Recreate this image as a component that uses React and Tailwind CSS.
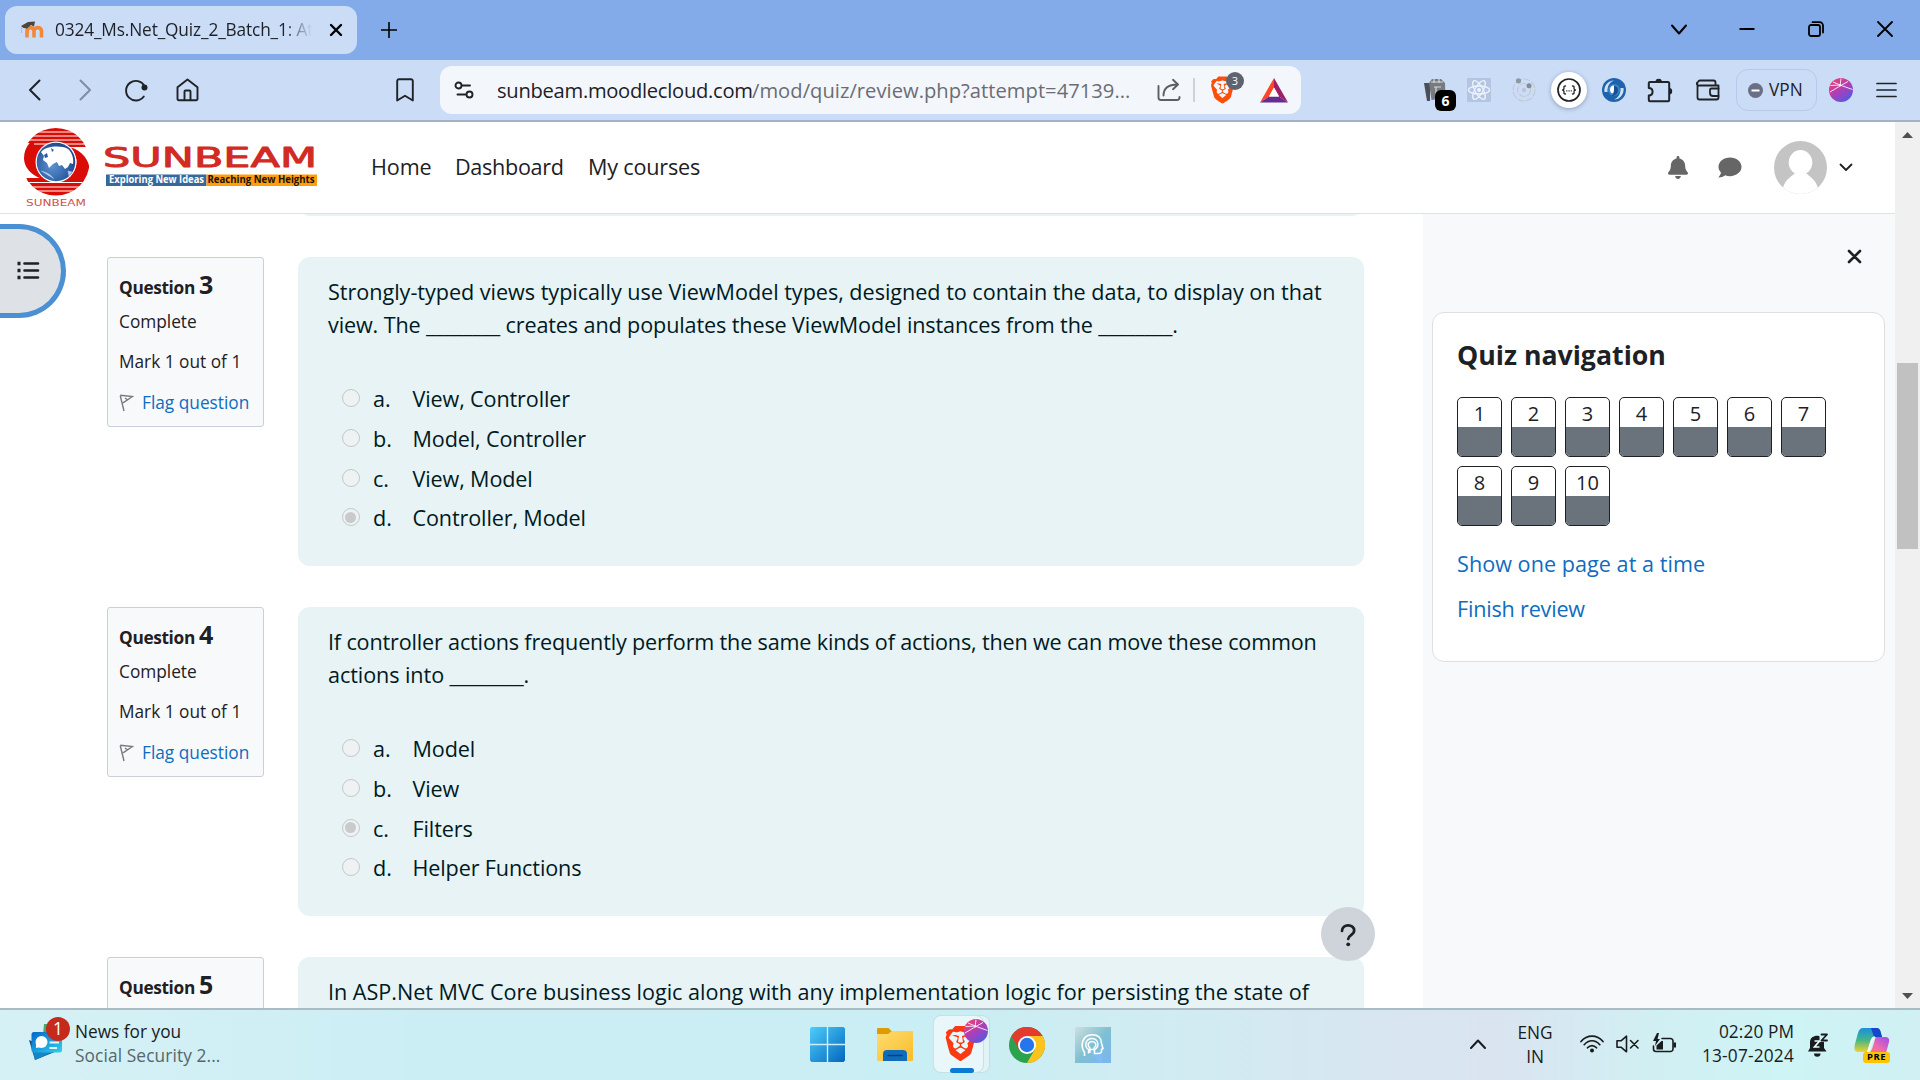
import { SiBrave } from 'react-icons/si';
import { FaBell, FaComment } from 'react-icons/fa';

const stroke = { fill: 'none', stroke: 'currentColor', strokeLinecap: 'round', strokeLinejoin: 'round' };

function MoodleIcon() {
  return (
    <svg className="h-[18px] w-[24px] shrink-0" viewBox="0 0 24 18">
      <path d="M7 16.500V10C7 5.500 14 5.500 14 10V16.500M14 10C14 5.500 21.500 5.500 21.500 10V16.500" fill="none" stroke="#f08a3a" strokeWidth="3.600" />
      <path d="M1 5 8 1l7-.5-1 5-3-1.500-4 3.500-3.500-.5Z" fill="#4a4542" />
      <path d="M1.500 6v6" stroke="#e9b08b" strokeWidth="1.200" />
    </svg>
  );
}

function TitleBar() {
  return (
    <div className="flex h-[60px] items-start bg-[#84abe9]">
      <div className="mt-1.5 ml-[5px] flex h-12 w-[352px] items-center rounded-xl bg-[#cbdcf6] pl-[15px]">
        <MoodleIcon />
        <div className="ml-[11px] w-[257px] overflow-hidden text-[17.28px] tracking-[-0.14px] whitespace-nowrap text-[#1d2127] [mask-image:linear-gradient(to_right,black_228px,transparent_257px)]">
          0324_Ms.Net_Quiz_2_Batch_1: Attempt
        </div>
        <svg className="ml-[17px] h-[14px] w-[14px]" viewBox="0 0 14 14"><path d="M2 2 12 12M12 2 2 12" {...stroke} strokeWidth="2.400" /></svg>
      </div>
      <svg className="mt-[22px] ml-6 h-4 w-4" viewBox="0 0 16 16"><path d="M8 .5v15M.5 8h15" {...stroke} strokeWidth="1.600" /></svg>
      <div className="mt-[21px] mr-[27px] ml-auto flex items-center text-black">
        <svg className="h-4 w-4" viewBox="0 0 16 16"><path d="M1 4.500 8 12.500 15 4.500" {...stroke} strokeWidth="2" /></svg>
        <svg className="ml-[52px] h-4 w-4" viewBox="0 0 16 16"><path d="M.5 8h15" stroke="currentColor" strokeWidth="2" /></svg>
        <svg className="ml-[53px] h-4 w-4" viewBox="0 0 16 16"><rect x="1" y="4" width="11" height="11" rx="2" {...stroke} strokeWidth="1.800" /><path d="M4.500 1.200H11.500A3.300 3.300 0 0 1 15 4.500V11.500" {...stroke} strokeWidth="1.800" /></svg>
        <svg className="ml-[53px] h-4 w-4" viewBox="0 0 16 16"><path d="M1 1 15 15M15 1 1 15" {...stroke} strokeWidth="1.800" /></svg>
      </div>
    </div>
  );
}

function AddressBar() {
  return (
    <div className="ml-[26px] flex h-12 w-[861px] items-center rounded-xl bg-[#f3f7fc]">
      <svg className="ml-[14px] h-5 w-5" viewBox="0 0 20 20"><g {...stroke} strokeWidth="1.900"><circle cx="4.500" cy="5.500" r="3" /><path d="M8.500 5.500H16M3.500 14.500h8" /><circle cx="15.500" cy="14.500" r="3" /></g></svg>
      <div className="ml-[23px] flex w-[636px] text-[20.16px] whitespace-nowrap">
        <span className="w-[255px] tracking-[-0.28px] text-[#1d2127]">sunbeam.moodlecloud.com</span>
        <span className="tracking-[0.03px] text-[#6a6d73]">/mod/quiz/review.php?attempt=47139...</span>
      </div>
      <svg className="ml-[24px] h-6 w-6 text-[#5b5f66]" viewBox="0 0 24 24"><g {...stroke} strokeWidth="1.900"><path d="M1.500 8V19.500a2.500 2.500 0 0 0 2.500 2.500H20a2.500 2.500 0 0 0 2.500-2.500V19" /><path d="M6.500 17.500C6.500 10 11 6.500 20.500 6.500M16 1.800l5 4.700-5 4.700" /></g></svg>
      <div className="ml-3 h-6 w-0.5 bg-[#ced3da]" />
      <div className="relative ml-[14px] h-[28px] w-[27px]">
        <SiBrave className="h-[28px] w-[27px] text-[#fb4e0a]" />
        <span className="absolute -top-[4px] left-[17px] flex h-[18px] w-[18px] items-center justify-center rounded-full bg-[#5f6370] text-[11px] text-white">3</span>
      </div>
      <svg className="ml-[24px] h-[25px] w-[28px]" viewBox="0 0 28 25">
        <path d="M14 0 0 24.500 9 18.500 14 9.500Z" fill="#ff4724" /><path d="M14 0 28 24.500 19 18.500 14 9.500Z" fill="#9e1f63" /><path d="M0 24.500H28L19 18.500H9Z" fill="#662d91" /><path d="M14 9.500 9 18.500h10Z" fill="#fff" />
      </svg>
    </div>
  );
}

function Orb({ className }) {
  return (
    <svg className={className} viewBox="0 0 24 24">
      <defs><linearGradient id="orb" x1="0.100" y1="0" x2="0.800" y2="1"><stop offset="0" stopColor="#f5416c" /><stop offset=".5" stopColor="#b23db5" /><stop offset="1" stopColor="#4b5be6" /></linearGradient></defs>
      <circle cx="12" cy="12" r="12" fill="url(#orb)" />
      <path d="M1 14Q9 9 19 3.500M4 4Q13 8 23.500 11.500M11 8.500 12 .5M1.500 7.500 12 7" stroke="#fff" strokeOpacity=".85" strokeWidth="1" fill="none" />
    </svg>
  );
}

function Toolbar() {
  return (
    <div className="flex h-[60px] items-center bg-[#cbdcf6] text-[#1f2227]">
      <svg className="ml-[28px] h-[22px] w-[13px]" viewBox="0 0 13 22"><path d="M11.500 1.500 2 11l9.500 9.500" {...stroke} strokeWidth="2" /></svg>
      <svg className="ml-[38px] h-[22px] w-[13px] text-[#7f8ca3]" viewBox="0 0 13 22"><path d="M1.500 1.500 11 11l-9.500 9.500" {...stroke} strokeWidth="2" /></svg>
      <svg className="ml-[32px] h-[24px] w-[25px]" viewBox="0 0 25 24"><path d="M19.800 18.500A9.800 9.800 0 1 1 20.500 8" {...stroke} strokeWidth="1.900" /><circle cx="20.500" cy="9.500" r="3" fill="currentColor" /></svg>
      <svg className="ml-[27px] h-[24px] w-[23px]" viewBox="0 0 23 24"><g {...stroke} strokeWidth="1.900"><path d="M1.500 9.200 11.500 1.500l10 7.700V21a1.200 1.200 0 0 1-1.200 1.200H2.700A1.200 1.200 0 0 1 1.500 21Z" /><path d="M8.500 22V13.500a1 1 0 0 1 1-1h4a1 1 0 0 1 1 1V22" /></g></svg>
      <svg className="ml-[197px] h-6 w-[18px]" viewBox="0 0 18 24"><path d="M1.200 3A1.800 1.800 0 0 1 3 1.200H15A1.800 1.800 0 0 1 16.800 3V22.500L9 17.800 1.200 22.500Z" {...stroke} strokeWidth="1.900" /></svg>
      <AddressBar />
      <div className="mr-[23px] ml-auto flex items-center">
        <div className="relative h-6 w-[22px]">
          <svg className="h-6 w-[22px]" viewBox="0 0 22 24"><path d="M0 5h6v18H3Z" fill="#4b4e52" /><path d="M5 5 8 1h9l4 4 .5 15-14 2Z" fill="#777b7f" /><path d="M7 4h12M10 1v4M15 1v4M10 9h7M12 9v7h4" stroke="#d5d9de" strokeWidth="1.200" fill="none" /></svg>
          <span className="absolute top-3 left-[11px] flex h-[21px] w-[21px] items-center justify-center rounded-md bg-black text-sm font-bold text-white">6</span>
        </div>
        <svg className="ml-[21px] h-6 w-6" viewBox="0 0 24 24"><rect width="24" height="24" rx="1" fill="#b3c5e3" /><g fill="none" stroke="#eef4fd" strokeWidth="1.300"><ellipse cx="12" cy="12" rx="10.500" ry="4" /><ellipse cx="12" cy="12" rx="10.500" ry="4" transform="rotate(60 12 12)" /><ellipse cx="12" cy="12" rx="10.500" ry="4" transform="rotate(120 12 12)" /></g><circle cx="12" cy="12" r="2" fill="#eef4fd" /></svg>
        <svg className="ml-[21px] h-6 w-6" viewBox="0 0 24 24"><g fill="none" stroke="#c2c9d5" strokeWidth="1.200" strokeDasharray="7 1.500"><circle cx="12" cy="12" r="11" /><circle cx="12" cy="12" r="6.500" /></g><circle cx="12" cy="12" r="2.200" fill="#bcc5d3" /><circle cx="6.500" cy="2.800" r="2.600" fill="#91969f" /><circle cx="17" cy="7.800" r="2.500" fill="#868b94" /></svg>
        <div className="ml-[15px] flex h-9 w-9 items-center justify-center rounded-full bg-white shadow-[0_1px_4px_rgba(60,80,110,0.45)]">
          <svg className="h-6 w-6" viewBox="0 0 24 24"><circle cx="12" cy="12" r="11" {...stroke} strokeWidth="1.700" /><path d="M8.500 8c-2 0-1.500 1-1.500 2.300S6.500 12 5.500 12c1 0 1.500.4 1.500 1.700S6.500 16 8.500 16M15.500 8c2 0 1.500 1 1.500 2.300s.5 1.700 1.500 1.700c-1 0-1.500.4-1.500 1.700s.5 2.300-1.500 2.300" {...stroke} strokeWidth="1.300" /><path d="M9.300 12.800h5.600" stroke="currentColor" strokeWidth="1.200" strokeDasharray="1.100 1.100" /></svg>
        </div>
        <svg className="ml-[15px] h-6 w-6" viewBox="0 0 24 24">
          <circle cx="12" cy="12" r="12" fill="#1f63ad" />
          <path d="M2.500 14A10 10 0 0 1 12 2.500C8 4 5 8 5.500 14Z" fill="#cfe2f4" />
          <path d="M21.500 10A10 10 0 0 1 12 21.500C16 20 19 16 18.500 10Z" fill="#cfe2f4" />
          <circle cx="12" cy="12" r="6" fill="#3b82c8" />
          <path d="M12 8a4 4 0 0 1 4 4c0 4-3 6-7 6 2-1 3-2.500 3-4.500Z" fill="#174f93" />
          <path d="M12 7.500a4 4 0 0 0-4 4.500c0 1.500 1 3 2.500 3.500Q12 14.500 12 12Z" fill="#fff" />
        </svg>
        <svg className="ml-[21px] h-[26px] w-[26px]" viewBox="0 0 26 26"><path d="M3 5H21A1.200 1.200 0 0 1 22.200 6V23a1.200 1.200 0 0 1-1.200 1.200H3A1.200 1.200 0 0 1 1.800 23V18.500c5 0 5-7.500 0-7.500V6A1.200 1.200 0 0 1 3 5Z" {...stroke} strokeWidth="2" /><path d="M8.500 5a3.200 3.200 0 0 1 6.400 0ZM22 11a3.200 3.200 0 0 1 0 6.400Z" fill="currentColor" /></svg>
        <svg className="ml-[23px] h-[22px] w-6" viewBox="0 0 24 22"><g {...stroke} strokeWidth="1.800"><path d="M1.500 5V18.500A2 2 0 0 0 3.500 20.500H20.500A2 2 0 0 0 22.500 18.500V6.500H3.500A1.700 1.700 0 0 1 2 3Q2.500 1.500 4 1.500H17.500A2 2 0 0 1 19.500 3.500V6.500" /><path d="M22.500 9.500H15.500a1.500 1.500 0 0 0-1.500 1.500v3a3 3 0 0 0 3 3h5.500" /></g></svg>
        <div className="ml-4 flex h-[42px] w-[81px] items-center rounded-xl border border-[#b7c9e8] pl-[11px]">
          <svg className="h-[15px] w-[15px]" viewBox="0 0 15 15"><circle cx="7.500" cy="7.500" r="7.500" fill="#6a6f87" /><path d="M3.500 7.500h8" stroke="#fff" strokeWidth="2" /></svg>
          <span className="ml-[6px] text-[17.28px]">VPN</span>
        </div>
        <Orb className="ml-[12px] h-6 w-6" />
        <svg className="ml-[23px] h-4 w-[21px]" viewBox="0 0 21 16"><path d="M1 1.500h19M1 8h19M1 14.500h19" {...stroke} strokeWidth="1.700" /></svg>
      </div>
    </div>
  );
}

function SunbeamLogo() {
  return (
    <svg className="ml-6 h-[82px] w-[296px]" viewBox="24 127 296 82">
      <defs>
        <clipPath id="disc"><circle cx="55.800" cy="161.800" r="33.800" /></clipPath>
        <radialGradient id="globe" cx=".4" cy=".6" r=".7"><stop offset="0" stopColor="#5a93cf" /><stop offset="1" stopColor="#173f8c" /></radialGradient>
      </defs>
      <g clipPath="url(#disc)" fill="#d90d06">
        <path d="M22 127H90V143H22Z" />
        <path d="M86 147H58C44 147 36 155 36 165 37 172 41 177 48 180 33 178 24 168 24 158 24 152 26 147 30 142.500H83Z" />
        <path d="M71 147.500C82 151 89.500 160 89.500 170 88 177 86 179 82 182H27L26 178H60C72 178 77 169 76.500 160 75.500 155 73.500 151 71 147.500Z" />
        <path d="M22 180H90V197H22Z" />
        <path d="M22 132H90M22 136H90M22 140H90M34 144H84M22 182.500H90M22 187H90M22 191H90" stroke="#fff" strokeWidth="1.200" />
      </g>
      <circle cx="56" cy="162" r="20.500" fill="#fff" />
      <circle cx="56" cy="162" r="19.300" fill="url(#globe)" />
      <path d="M41 152c5-6 20-7 27-3 4 3 6 10 5 15l-3-1-2 4-3 2-3-4-3 1-2-4-4 2-4 4-2-5-4-3 1-4Z" fill="#fff" />
      <path d="M44 155l3-2 1 4-3 1ZM51 148l3 2-2 2Z" fill="#2b5ba5" />
      <path d="M41 171q9 2 13 8M68 171l4 1-3 4Z" stroke="#a9c8ea" fill="#b9d2ee" strokeWidth=".6" />
      <text x="26" y="205.500" fill="#d4504a" fontFamily="DejaVu Sans" fontSize="8" textLength="60" lengthAdjust="spacingAndGlyphs">SUNBEAM</text>
      <text x="103" y="167" fill="#d22b24" stroke="#d22b24" strokeWidth=".9" strokeLinejoin="round" fontFamily="DejaVu Sans" fontSize="27" textLength="214" lengthAdjust="spacingAndGlyphs">SUNBEAM</text>
      <path d="M106 174.500H206.500V186H106Z" fill="#35699d" />
      <path d="M206.500 174.500H317V186H206.500Z" fill="#ff9d0a" />
      <text x="109" y="183.200" fill="#fff" fontFamily="Open Sans" fontWeight="700" fontSize="10" textLength="95" lengthAdjust="spacingAndGlyphs">Exploring New Ideas</text>
      <text x="207.500" y="183.200" fill="#1b1208" fontFamily="Open Sans" fontWeight="700" fontSize="10" textLength="107" lengthAdjust="spacingAndGlyphs">Reaching New Heights</text>
    </svg>
  );
}

function SiteHeader() {
  return (
    <header className="flex h-[92px] items-center border-b border-[#dee2e6] bg-white text-[21.6px] text-[#1d2125]">
      <SunbeamLogo />
      <nav className="ml-[51px] flex">
        <a className="w-[84px] tracking-[-0.1px]">Home</a>
        <a className="w-[133px] tracking-[-0.3px]">Dashboard</a>
        <a className="tracking-[-0.18px]">My courses</a>
      </nav>
      <div className="mr-[42px] ml-auto flex items-center text-[#666]">
        <FaBell className="h-[23px] w-5" />
        <FaComment className="ml-[30px] h-[23px] w-6" />
        <svg className="ml-[32px] h-[53px] w-[53px]" viewBox="0 0 53 53">
          <defs><clipPath id="avatar"><circle cx="26.500" cy="26.500" r="26.500" /></clipPath></defs>
          <g clipPath="url(#avatar)"><rect width="53" height="53" fill="#c4c4c4" /><ellipse cx="26.500" cy="21.500" rx="11.800" ry="12.500" fill="#fff" /><path d="M8 53C9 38 18 36 22 31h9c4 5 13 7 14 22Z" fill="#fff" /></g>
        </svg>
        <svg className="ml-[12px] h-[9px] w-[14px] text-[#1d2125]" viewBox="0 0 14 9"><path d="M1.500 1.500 7 7l5.500-5.500" {...stroke} strokeWidth="1.800" /></svg>
      </div>
    </header>
  );
}

function Blank() {
  return <span className="tracking-[-0.22px]">________</span>;
}

function Radio({ checked }) {
  return (
    <span className="flex h-[18px] w-[18px] items-center justify-center rounded-full border border-[#c4c8c9] bg-[#eff2f3]">
      {checked && <span className="h-[11px] w-[11px] rounded-full bg-[#c8cacb]" />}
    </span>
  );
}

function Question({ number, lines, options = [], answer }) {
  return (
    <section className="flex h-[350px] shrink-0 items-start">
      <div className="ml-[107px] h-[170px] w-[157px] rounded-[3px] border border-[#cad0d7] bg-[#f8f9fa] pl-[11px] text-[17.28px] text-[#1d2125]">
        <div className="mt-[8px] flex h-[37px] items-baseline font-bold">
          <span className="w-[80px] tracking-[-0.35px]">Question</span>
          <span className="text-[25px] leading-[36px]">{number}</span>
        </div>
        <div className="h-10 leading-[38px]">Complete</div>
        <div className="h-10 leading-[38px]">Mark 1 out of 1</div>
        <div className="flex h-10 items-center text-[#0f6cbf]">
          <svg className="h-[18px] w-[15px]" viewBox="0 0 15 18"><path d="M1.200 1.500 5 17M1.200 1.200 13.500 2.500 4 8.800M6 4l2 1.500" fill="none" stroke="#777b80" strokeWidth="1.400" /></svg>
          <span className="ml-[8px] leading-[36px] -mt-[1px]">Flag question</span>
        </div>
      </div>
      <div className="ml-[34px] h-[309px] w-[1066px] rounded-xl bg-[#e7f3f5] pt-[18px] pl-[30px] text-[21.6px] text-[#001a1e]">
        <div className="h-[104px] leading-[33px] whitespace-nowrap">
          {lines}
        </div>
        {options.map((text, i) => (
          <div key={text} className="flex h-[39.700px] items-center">
            <span className="-mt-[1px] ml-[13.500px]"><Radio checked={i === answer} /></span>
            <span className="ml-[13.500px] w-[39.500px] leading-[33px]">{'abcd'[i]}.</span>
            <span className="leading-[33px] tracking-[-0.13px]">{text}</span>
          </div>
        ))}
      </div>
    </section>
  );
}

function QuizNavigation() {
  return (
    <aside className="w-[472px] bg-[#f8f9fa] pl-[9px]">
      <svg className="mt-[35px] ml-[415px] h-[15px] w-[15px] text-[#1d2125]" viewBox="0 0 15 15"><path d="M2 2 13 13M13 2 2 13" {...stroke} strokeWidth="2.600" /></svg>
      <div className="mt-[48px] h-[350px] w-[453px] rounded-xl border border-[#dfdfdf] bg-white pl-6 text-[21.6px]">
        <h5 className="mt-[24px] h-[60px] text-[26.700px] leading-9 font-bold text-[#1d2125]">Quiz navigation</h5>
        <div className="grid grid-cols-[repeat(7,45px)] gap-[9px]">
          {[1, 2, 3, 4, 5, 6, 7, 8, 9, 10].map((n) => (
            <div key={n} className="flex h-[60px] flex-col overflow-hidden rounded-[5px] border border-[#1d2125] bg-white text-center text-[20px] text-[#1d2125]">
              <span className="h-[29px] leading-[32px]">{n}</span>
              <span className="flex-1 bg-[#6a737b]" />
            </div>
          ))}
        </div>
        <div className="mt-[21px] flex flex-col text-[#0f6cbf]">
          <a className="h-[45px] leading-[33px] tracking-[0.04px]">Show one page at a time</a>
          <a className="leading-[33px] tracking-[-0.2px]">Finish review</a>
        </div>
      </div>
    </aside>
  );
}

function Scrollbar() {
  return (
    <div className="flex w-[25px] flex-col items-center bg-[#f0f0f0]">
      <svg className="mt-[10px] h-[6px] w-[11px]" viewBox="0 0 11 6"><path d="M0 6 5.500 0 11 6Z" fill="#505050" /></svg>
      <div className="mt-[225px] h-[186px] w-[21px] bg-[#c1c1c1]" />
      <svg className="mt-auto mb-[9px] h-[6px] w-[11px]" viewBox="0 0 11 6"><path d="M0 0 5.500 6 11 0Z" fill="#505050" /></svg>
    </div>
  );
}

function Page() {
  return (
    <div className="flex h-[886px] bg-white">
      <div className="relative flex w-[1895px] flex-col">
        <SiteHeader />
        <div className="flex h-[794px] overflow-hidden">
          <main className="flex w-[1423px] flex-col overflow-hidden">
            <div className="mb-[41px] ml-[298px] flex h-[2px] w-[1066px] shrink-0 flex-col justify-end overflow-hidden">
              <div className="h-6 shrink-0 rounded-xl bg-[#e7f3f5]" />
            </div>
            <Question
              number="3"
              answer={3}
              lines={<>
                <div className="tracking-[-0.025px]">Strongly-typed views typically use ViewModel types, designed to contain the data, to display on that</div>
                <div className="tracking-[-0.12px]">view. The <Blank /> creates and populates these ViewModel instances from the <Blank />.</div>
              </>}
              options={['View, Controller', 'Model, Controller', 'View, Model', 'Controller, Model']}
            />
            <Question
              number="4"
              answer={2}
              lines={<>
                <div className="tracking-[-0.17px]">If controller actions frequently perform the same kinds of actions, then we can move these common</div>
                <div className="tracking-[-0.08px]">actions into <Blank />.</div>
              </>}
              options={['Model', 'View', 'Filters', 'Helper Functions']}
            />
            <Question number="5" lines={<div className="tracking-[-0.02px]">In ASP.Net MVC Core business logic along with any implementation logic for persisting the state of</div>} />
          </main>
          <QuizNavigation />
        </div>
        <button className="absolute top-[102px] left-0 flex h-[94px] w-[66px] items-center rounded-r-full border-y-[5px] border-r-[5px] border-[#4a90d2] bg-[#dee2e6] pl-[15.500px]">
          <svg className="h-5 w-[24px] text-[#1d2125]" viewBox="0 0 24 20"><path d="M8.500 2.500H22M8.500 9.500H22M8.500 16.500H22" {...stroke} strokeWidth="2.600" /><path d="M1.500.7h3v3.600h-3ZM1.500 7.700h3v3.600h-3ZM1.500 14.700h3v3.600h-3Z" fill="currentColor" /></svg>
        </button>
        <button className="absolute top-[785px] left-[1321px] flex h-[54px] w-[54px] items-center justify-center rounded-full bg-[#ced4da]">
          <svg className="mt-px -ml-px h-6 w-4" viewBox="0 0 16 24"><path d="M2 8C2 .5 14.200.5 14.200 7.500 14.200 12 8.200 12 8.200 16" fill="none" stroke="#1d2125" strokeWidth="2.700" strokeLinecap="round" /><circle cx="8.200" cy="21.300" r="1.900" fill="#1d2125" /></svg>
        </button>
      </div>
      <Scrollbar />
    </div>
  );
}

function Chrome() {
  return (
    <svg className="h-9 w-9" viewBox="0 0 36 36">
      <circle cx="18" cy="18" r="18" fill="#2ba24c" />
      <path d="M18 18V9H33.600A18 18 0 0 1 18 36L25.800 22.500Z" fill="#fcc31e" />
      <path d="M2.400 9A18 18 0 0 1 33.600 9H18L10.200 22.500Z" fill="#e33b2e" />
      <circle cx="18" cy="18" r="9" fill="#fff" />
      <circle cx="18" cy="18" r="7.200" fill="#2675ec" />
    </svg>
  );
}

function Taskbar() {
  return (
    <div className="grid h-[72px] grid-cols-[810px_1fr_auto] border-t-2 border-[#a9bcc4] bg-[linear-gradient(to_right,#d6f1f5_0%,#cbeef4_22%,#c9eef3_50%,#d0ecf2_60%,#d8e6f1_72%,#dae4f1_78%,#d1eff3_86%,#cef4f5_93%,#d0f0f3_100%)] text-[17.28px] text-[#191c1e]">
      <div className="flex">
        <div className="relative mt-[7px] ml-[29px] h-[44px] w-10">
          <svg className="h-[44px] w-10" viewBox="0 0 40 44">
            <defs><linearGradient id="news" x1="0" y1="0" x2="1" y2="1"><stop offset="0" stopColor="#0467ce" /><stop offset="1" stopColor="#31d0e8" /></linearGradient></defs>
            <path d="M14 18 15 7h14v11Z" fill="#47a86a" /><path d="M0 23 28 34 6 43Z" fill="#0d4f8c" /><path d="M4 34H26L6 43Z" fill="#1587c9" />
            <path d="M5 15H33V33a2.500 2.500 0 0 1-2.500 2.500H5A2.500 2.500 0 0 1 2.500 33V17.500A2.500 2.500 0 0 1 5 15Z" fill="url(#news)" />
            <circle cx="12.500" cy="25" r="6" fill="#fff" /><path d="M7 31v-6l5 5Z" fill="#fff" /><path d="M20.500 25.500H30M20.500 31H28" stroke="#dff8fd" strokeWidth="2" />
          </svg>
          <span className="absolute top-0 left-[17px] flex h-6 w-6 items-center justify-center rounded-full bg-[#c42b1c] leading-6 text-white">1</span>
        </div>
        <div className="mt-[10px] ml-[6px] leading-6">
          <div>News for you</div>
          <div className="tracking-[0.12px] text-[#56666b]">Social Security 2...</div>
        </div>
      </div>
      <div className="flex h-[70px] items-center">
        <svg className="-mt-px h-[35px] w-[35px]" viewBox="0 0 35 35">
          <defs><linearGradient id="win" x1="0" y1="0" x2="1" y2="1"><stop offset="0" stopColor="#4ecdfb" /><stop offset="1" stopColor="#0367bf" /></linearGradient></defs>
          <path d="M1.500 0H16.800V16.800H0V1.500ZM18.200 0H33.500L35 1.500V16.800H18.200ZM0 18.200H16.800V35H1.500L0 33.500ZM18.200 18.200H35V33.500L33.500 35H18.200Z" fill="url(#win)" />
        </svg>
        <svg className="-mt-px ml-8 h-[33px] w-9" viewBox="0 0 36 33">
          <defs><linearGradient id="folder" x1="0" y1="0" x2="1" y2="1"><stop offset="0" stopColor="#ffdc70" /><stop offset="1" stopColor="#f8bd29" /></linearGradient></defs>
          <path d="M0 1A1 1 0 0 1 1 0H11.500L15 3.500V8H0Z" fill="#dd9b06" />
          <path d="M0 6H11L15 3H35a1 1 0 0 1 1 1V32a1 1 0 0 1-1 1H1a1 1 0 0 1-1-1Z" fill="url(#folder)" />
          <path d="M6 33V26a4 4 0 0 1 4-4H26a4 4 0 0 1 4 4v7Z" fill="#0f6cbd" /><path d="M11 27.500H25" stroke="#083f73" strokeWidth="1.500" strokeLinecap="round" />
        </svg>
        <div className="relative -mt-[2px] ml-5 h-[58px] w-[57px]">
          <div className="absolute top-0 left-0 h-[58px] w-[57px] rounded-lg border border-[#c5dee4] bg-[#e0f3f7]" />
          <div className="relative flex h-[58px] w-[51px] flex-col items-center rounded-lg border border-[#c8e0e6] bg-[#e9f7fa]">
            <SiBrave className="mt-[9px] ml-[4px] h-[37px] w-[35px] text-[#fb3a13]" />
          </div>
          <Orb className="absolute top-[4px] left-[31px] h-[24px] w-[24px]" />
          <div className="absolute bottom-0 left-[17px] h-[5px] w-6 rounded-full bg-[#0a7ad3]" />
        </div>
        <div className="-mt-px ml-[19px]"><Chrome /></div>
        <svg className="-mt-px ml-[30px] h-9 w-9" viewBox="0 0 36 36">
          <defs><linearGradient id="head" x1="0" y1="0" x2="1" y2="1"><stop offset="0" stopColor="#cfdfdf" /><stop offset=".5" stopColor="#7fc0d2" /><stop offset="1" stopColor="#7ab6ef" /></linearGradient></defs>
          <rect width="36" height="36" fill="url(#head)" />
          <path d="M14 25 27 26V36H26Z" fill="#83baf5" />
          <g fill="none" stroke="#fff" strokeWidth="1.600"><path d="M9.500 29V25.500C5 19 7 8 17 7.800 24 7.800 26.500 12 26.500 16.500l1.500 5-1.500 1v2q0 2-4 2H19.500V22" /><path d="M13.500 26.500V22.500C8.500 19 11 11.500 17 11.500S25 19 20 22.500M15 26V21C11.500 18 13.500 14.500 17 14.500s5.500 3.500 2 6.500v1.500H13.500" strokeWidth="1.400" /></g>
        </svg>
      </div>
      <div className="flex h-[70px] items-center pr-[30px] leading-6">
        <svg className="-mt-[3px] h-[10px] w-4" viewBox="0 0 16 10"><path d="M1 9 8 1.500 15 9" {...stroke} strokeWidth="2" /></svg>
        <div className="ml-[29px] w-10 text-center tracking-[-0.1px]"><div>ENG</div><div>IN</div></div>
        <svg className="-mt-[3px] ml-[25px] h-[18px] w-6" viewBox="0 0 24 18"><g {...stroke} strokeWidth="1.700"><path d="M1 6.500C7-.7 17-.7 23 6.500M4.200 9.700c4.500-5.300 11.100-5.300 15.600 0M7.500 12.800c2.700-3 6.300-3 9 0" /></g><circle cx="12" cy="15.500" r="2" fill="currentColor" /></svg>
        <svg className="-mt-[2px] ml-3 h-[18px] w-6" viewBox="0 0 24 18"><path d="M1 5.800H5L10.500 1.200V16.800L5 12.200H1ZM14.500 5.500l7.500 7.500M22 5.500 14.500 13" {...stroke} strokeWidth="1.600" /></svg>
        <svg className="-mt-[5px] ml-3 h-5 w-[25px]" viewBox="0 0 25 20"><path d="M10 5.500H18.500A2.500 2.500 0 0 1 21 8v8a2.500 2.500 0 0 1-2.500 2.500H4A2.500 2.500 0 0 1 1.500 16v-3" {...stroke} strokeWidth="1.600" /><path d="M5 0 1 8H4L3 13 8 6H5.500L7 0Z" fill="currentColor" /><path d="M4.500 16.500V12.500L9.500 8h1.500v8.500ZM21.500 9.500H24v5H21.500Z" fill="currentColor" /></svg>
        <div className="-mt-[2px] ml-[24px] w-[93px] text-right"><div className="tracking-[0.08px]">02:20 PM</div><div className="tracking-[0.2px]">13-07-2024</div></div>
        <svg className="-mt-px ml-[13px] h-6 w-[22px]" viewBox="0 0 22 24"><path d="M1 18.500 3 15V9C3 .5 17 .5 17 9V15l2.500 3.500ZM7 20.500h6.500a3.200 3.200 0 0 1-6.500 0Z" fill="currentColor" /><rect x="12.500" y="0" width="9" height="9" fill="#cff3f5" /><path d="M7.500 8h5l-5 6h5" stroke="#e9fbfb" strokeWidth="1.700" fill="none" /><path d="M14.500 1.500h5.500L14.500 7.500h5.500" {...stroke} strokeWidth="1.800" /></svg>
        <div className="relative ml-[25px] h-[35px] w-[36px]">
          <svg className="h-[30px] w-[36px]" viewBox="0 0 36 30">
            <defs>
              <linearGradient id="cpa" x1="0" y1="0" x2="0" y2="1"><stop offset="0" stopColor="#1a8fe0" /><stop offset=".5" stopColor="#43b58a" /><stop offset="1" stopColor="#f4d22c" /></linearGradient>
              <linearGradient id="cpb" x1="1" y1="0" x2="0" y2="1"><stop offset="0" stopColor="#a04bf0" /><stop offset=".6" stopColor="#ee6cab" /><stop offset="1" stopColor="#fb7d52" /></linearGradient>
            </defs>
            <path d="M9 0H22q3 0 4.500 4L28 9H22q-4 0-5.500 5L13 24H4C0 24 0 20 1 16L4 5Q5.500 0 9 0Z" fill="url(#cpa)" />
            <path d="M17 0h6q3 0 4 5l1 4H20Z" fill="#1348c8" />
            <path d="M22 9H31q5 0 4 5l-3 11H14q3-1 4-4l2.500-8Q21.500 9 22 9Z" fill="url(#cpb)" />
            <path d="M21 9.500h-1q-2 1-3 5l-3 10" stroke="#eefafa" strokeWidth="2.200" fill="none" />
          </svg>
          <span className="absolute bottom-0 left-[9px] flex h-[11px] w-[27px] items-center justify-center rounded-[3px] bg-[#fdc500] text-[9.500px] leading-none font-bold tracking-[0.5px] text-black">PRE</span>
        </div>
      </div>
    </div>
  );
}

export default function App() {
  return (
    <div className="flex h-[1080px] w-[1920px] flex-col overflow-hidden font-['Open_Sans','Noto_Sans',sans-serif]">
      <TitleBar />
      <Toolbar />
      <div className="h-0.5 shrink-0 bg-[#a3b1c9]" />
      <Page />
      <Taskbar />
    </div>
  );
}
